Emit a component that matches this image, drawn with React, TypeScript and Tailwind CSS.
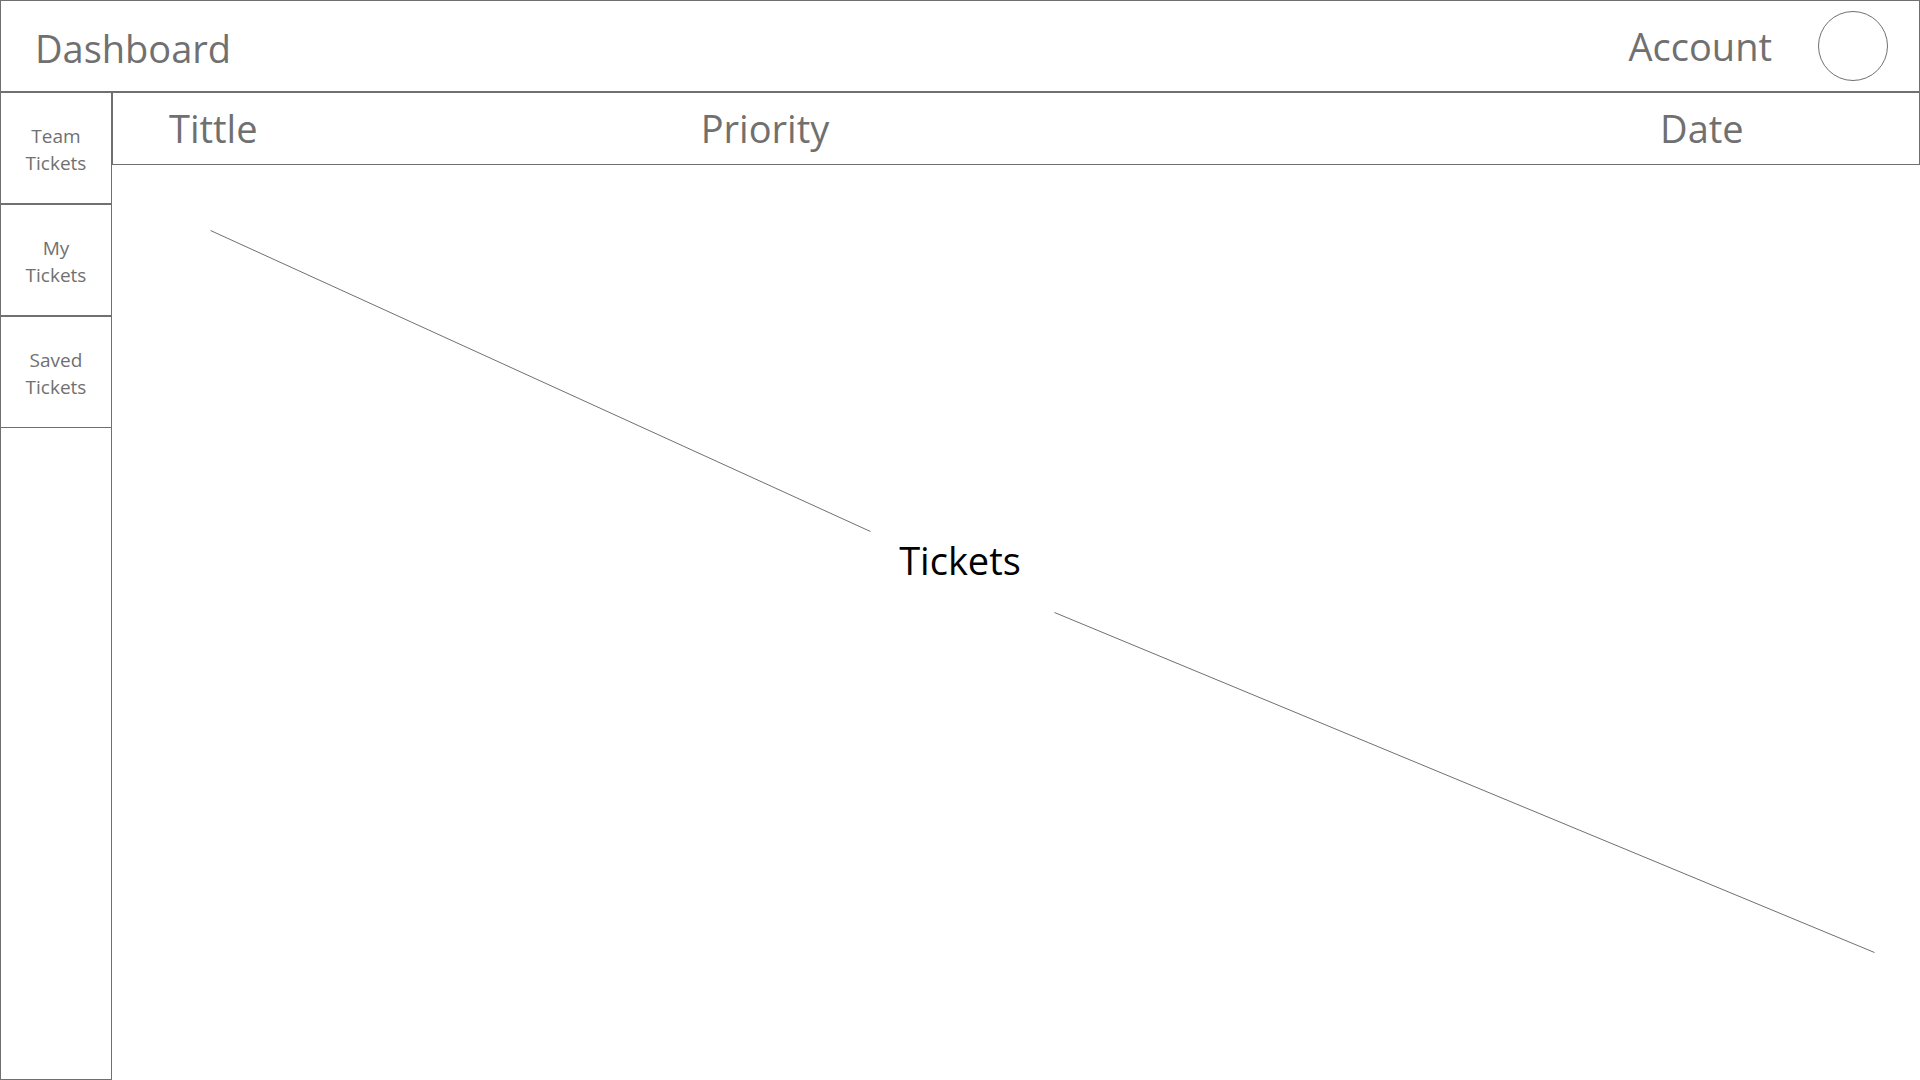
const views = [
  { first: "Team", second: "Tickets" },
  { first: "My", second: "Tickets" },
  { first: "Saved", second: "Tickets" },
];

function Header() {
  return (
    <header className="flex h-[92px] shrink-0 items-center justify-between border border-[#707070] pr-[31px] pl-[34px]">
      <h1 className="pt-1 text-[38px] leading-[52px]">Dashboard</h1>
      <div className="flex items-center gap-[46px]">
        <span className="text-[38px] leading-[52px]">Account</span>
        <button
          type="button"
          aria-label="Account"
          className="size-[70px] rounded-full border border-[#707070]"
        />
      </div>
    </header>
  );
}

function Sidebar() {
  return (
    <nav className="w-28 shrink-0 border border-t-0 border-[#707070]">
      {views.map((view) => (
        <button
          key={view.first}
          type="button"
          className="flex h-28 w-full flex-col items-center justify-center border-y border-[#707070] pt-1 text-[19px] leading-[27px]"
        >
          <span>{view.first}</span>
          <span>{view.second}</span>
        </button>
      ))}
    </nav>
  );
}

function TicketArea() {
  return (
    <section className="relative flex flex-1 items-center justify-center pr-28 pb-[126px]">
      <svg
        className="absolute inset-0 size-full"
        viewBox="0 0 1808 915"
        preserveAspectRatio="none"
        stroke="#707070"
        aria-hidden="true"
      >
        <line x1="98.5" y1="65.5" x2="758.5" y2="366.5" vectorEffect="non-scaling-stroke" />
        <line x1="942.5" y1="447.5" x2="1762.5" y2="787.5" vectorEffect="non-scaling-stroke" />
      </svg>
      <p className="text-[38px] leading-[52px] text-black">Tickets</p>
    </section>
  );
}

export default function App() {
  return (
    <div className="flex min-h-screen flex-col bg-white font-['Open_Sans','Noto_Sans',sans-serif] text-[#707070]">
      <Header />
      <div className="flex flex-1">
        <Sidebar />
        <main className="flex flex-1 flex-col">
          <table className="w-full table-fixed border-separate border-spacing-0 border border-[#707070] text-left text-[38px] leading-[52px]">
            <thead>
              <tr className="h-[71px]">
                <th className="w-[29%] p-0 pb-0.5 pl-14 font-normal">Tittle</th>
                <th className="p-0 pb-0.5 pl-16 font-normal">Priority</th>
                <th className="w-[15%] p-0 pb-0.5 pl-3 font-normal">Date</th>
              </tr>
            </thead>
          </table>
          <TicketArea />
        </main>
      </div>
    </div>
  );
}
